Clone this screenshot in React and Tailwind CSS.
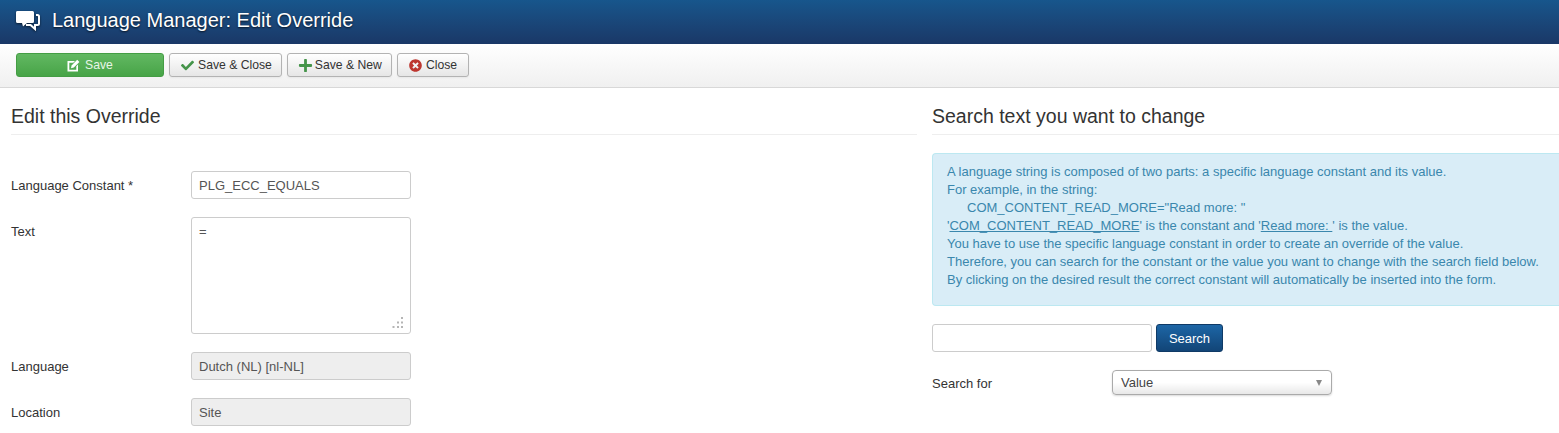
import { FaCheck, FaPlus, FaTimesCircle } from 'react-icons/fa';

const font = { fontFamily: '"Liberation Sans", Arial, sans-serif' };

function CommentsIcon() {
  return (
    <svg width="24" height="21" viewBox="0 0 24 21" className="drop-shadow-[0_1px_1px_rgba(0,0,0,0.6)]">
      <path fill="#fff" d="M1.5 1h15a1.5 1.5 0 0 1 1.5 1.5v9a1.5 1.5 0 0 1-1.5 1.5H11l-4 3.5-1-3.5H1.5A1.5 1.5 0 0 1 0 11.5v-9A1.5 1.5 0 0 1 1.5 1z" />
      <path fill="none" stroke="#fff" strokeWidth="2" d="M20 5h1.5a1.5 1.5 0 0 1 1.5 1.5v7a1.5 1.5 0 0 1-1.5 1.5H19v4l-4.5-4H10" />
    </svg>
  );
}

function EditIcon() {
  return (
    <svg width="13" height="13" viewBox="0 0 13 13" fill="#fff">
      <path d="M0.5 2h7.5L6.2 3.8H2.3v7h7V7.2L11 5.4v7.1H0.5z" />
      <path d="M4.6 6.4 10.2.8l2.2 2.2-5.6 5.6-2.8.6z" />
    </svg>
  );
}

function ToolButton({ icon, label, className }) {
  return (
    <button className={`flex h-6 items-center rounded-[3px] border border-[#b3b3b3] bg-gradient-to-b from-white to-[#e6e6e6] pl-[11px] text-[12.2px] text-[#333] shadow-[0_1px_2px_rgba(0,0,0,0.05)] ${className}`}>
      {icon}
      {label}
    </button>
  );
}

function Field({ label, value, disabled, className }) {
  return (
    <div className={`flex items-center ${className}`}>
      <label className="w-[180px] pt-px text-[13px] text-[#333]">{label}</label>
      <div className={`flex h-7 w-[220px] items-center rounded-[3px] border border-[#ccc] px-[7px] pt-px text-[13px] text-[#555] ${disabled ? 'bg-[#eee]' : 'bg-white'}`}>
        {value}
      </div>
    </div>
  );
}

export default function App() {
  return (
    <div style={font} className="h-[433px] overflow-hidden bg-white">
      <header className="flex h-11 items-center gap-[12px] bg-gradient-to-b from-[#17568c] to-[#1a3867] pb-1 pl-4">
        <CommentsIcon />
        <h1 className="text-[20px] leading-6 text-white [text-shadow:0_1px_2px_rgba(0,0,0,0.7)]">Language Manager: Edit Override</h1>
      </header>

      <div className="flex h-[44px] gap-[5px] border-b border-[#d8d8d8] bg-gradient-to-b from-white to-[#f0f0f0] pl-4 pt-[9px]">
        <button className="flex h-6 w-[148px] items-center justify-center gap-[5px] rounded-[3px] border border-[#449d44] bg-gradient-to-b from-[#62b862] to-[#47a447] text-[12.2px] text-[#e8f5e8]">
          <EditIcon />
          Save
        </button>
        <ToolButton className="gap-1 pr-[9px]" icon={<FaCheck className="text-[13px] text-[#45944a]" />} label="Save & Close" />
        <ToolButton className="gap-[2px] pr-[9px]" icon={<FaPlus className="-ml-px text-[15px] text-[#45944a]" />} label="Save & New" />
        <ToolButton className="gap-1 pr-[11px]" icon={<FaTimesCircle className="text-[13px] text-[#bd362f]" />} label="Close" />
      </div>

      <main className="flex gap-[15px] pl-[11px]">
        <section className="w-[906px] shrink-0">
          <h2 className="flex h-[47px] items-end border-b border-[#eee] pb-[6px] text-[19.5px] leading-6 text-[#333]">Edit this Override</h2>
          <Field label="Language Constant *" value="PLG_ECC_EQUALS" className="mt-[36px]" />
          <div className="mt-[18px] flex items-start">
            <label className="w-[180px] pt-[5px] text-[13px] text-[#333]">Text</label>
            <div className="relative h-[117px] w-[220px] rounded-[3px] border border-[#ccc] bg-white px-[7px] py-[4px] text-[13px] text-[#555]">
              =
              <svg width="13" height="13" viewBox="0 0 13 13" fill="#b5b5b5" className="absolute bottom-[4px] right-[6px]">
                <rect x="10" y="1" width="2" height="2" />
                <rect x="6" y="5.5" width="2" height="2" />
                <rect x="10" y="5.5" width="2" height="2" />
                <rect x="1.5" y="10" width="2" height="2" />
                <rect x="6" y="10" width="2" height="2" />
                <rect x="10" y="10" width="2" height="2" />
              </svg>
            </div>
          </div>
          <Field label="Language" value="Dutch (NL) [nl-NL]" disabled className="mt-[18px]" />
          <Field label="Location" value="Site" disabled className="mt-[18px]" />
        </section>

        <section className="min-w-0 flex-1">
          <h2 className="flex h-[47px] items-end border-b border-[#eee] pb-[6px] text-[19.5px] leading-6 text-[#333]">Search text you want to change</h2>
          <div className="mt-[18px] h-[153px] rounded-l-[4px] border border-r-0 border-[#bce8f1] bg-[#d9edf7] pl-[14px] pt-[9px] text-[13px] leading-[18px] text-[#3a87ad]">
            <p>A language string is composed of two parts: a specific language constant and its value.</p>
            <p>For example, in the string:</p>
            <p className="pl-[20px]">COM_CONTENT_READ_MORE=&quot;Read more: &quot;</p>
            <p>
              &#39;<span className="underline">COM_CONTENT_READ_MORE</span>&#39; is the constant and &#39;<span className="underline">Read more: </span>&#39; is the value.
            </p>
            <p>You have to use the specific language constant in order to create an override of the value.</p>
            <p>Therefore, you can search for the constant or the value you want to change with the search field below.</p>
            <p>By clicking on the desired result the correct constant will automatically be inserted into the form.</p>
          </div>
          <div className="mt-[18px] flex items-center gap-1">
            <div className="h-7 w-[220px] rounded-[3px] border border-[#ccc] bg-white" />
            <button className="h-7 w-[67px] rounded-[3px] border border-[#0f3a66] bg-gradient-to-b from-[#1d66a6] to-[#124577] pt-px text-[13px] text-white">Search</button>
          </div>
          <div className="mt-[18px] flex items-center">
            <label className="w-[180px] pt-[2px] text-[13px] text-[#333]">Search for</label>
            <div className="flex h-[25px] w-[220px] items-center justify-between rounded-[4px] border border-[#aaa] bg-gradient-to-b from-white via-white to-[#e8e8e8] pl-2 pr-[9px] text-[13px] text-[#444] shadow-[0_1px_2px_rgba(0,0,0,0.15)]">
              Value
              <span className="h-0 w-0 border-x-[3.5px] border-t-[6px] border-x-transparent border-t-[#888]" />
            </div>
          </div>
        </section>
      </main>
    </div>
  );
}
